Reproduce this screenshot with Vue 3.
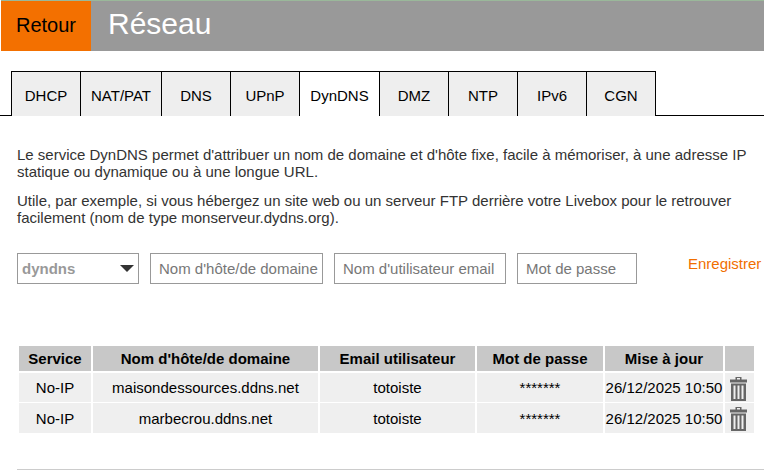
<script setup>
const tabs = ['DHCP', 'NAT/PAT', 'DNS', 'UPnP', 'DynDNS', 'DMZ', 'NTP', 'IPv6', 'CGN']
const rows = [
  { host: 'maisondessources.ddns.net' },
  { host: 'marbecrou.ddns.net' }
]
</script>

<template>
  <div class="page">
    <header class="top">
      <div class="back">Retour</div>
      <h1 class="title">Réseau</h1>
    </header>
    <nav class="tabs">
      <div v-for="t in tabs" :key="t" class="tab" :class="{ active: t === 'DynDNS' }">{{ t }}</div>
    </nav>
    <section class="intro">
      <p>Le service DynDNS permet d'attribuer un nom de domaine et d'hôte fixe, facile à mémoriser, à une adresse IP statique ou dynamique ou à une longue URL.</p>
      <p>Utile, par exemple, si vous hébergez un site web ou un serveur FTP derrière votre Livebox pour le retrouver facilement (nom de type monserveur.dydns.org).</p>
    </section>
    <form class="form" @submit.prevent>
      <div class="select"><span>dyndns</span><i class="arrow"></i></div>
      <input class="field f1" placeholder="Nom d'hôte/de domaine" />
      <input class="field f2" placeholder="Nom d'utilisateur email" />
      <input class="field f3" placeholder="Mot de passe" />
      <a class="save">Enregistrer</a>
    </form>
    <table class="list">
      <thead>
        <tr>
          <th class="c1">Service</th>
          <th class="c2">Nom d'hôte/de domaine</th>
          <th class="c3">Email utilisateur</th>
          <th class="c4">Mot de passe</th>
          <th class="c5">Mise à jour</th>
          <th class="c6"></th>
        </tr>
      </thead>
      <tbody>
        <tr v-for="r in rows" :key="r.host">
          <td>No-IP</td>
          <td>{{ r.host }}</td>
          <td>totoiste</td>
          <td>*******</td>
          <td class="date">26/12/2025 10:50</td>
          <td class="trash">
            <svg width="17" height="24" viewBox="0 0 17 24">
              <path fill="#666" fill-rule="evenodd" d="M5.500 0h6v2.500H17v3H0v-3h5.500zM7 1v1.500h3V1zM1 6.500h15V24H1zM3.500 8.500V22H5.500V8.500zM7.500 8.500V22h2V8.500zM11.500 8.500V22h2V8.500z"/>
            </svg>
          </td>
        </tr>
      </tbody>
    </table>
    <div class="rule"></div>
  </div>
</template>

<style>
html, body { margin: 0; background: #fff; }
</style>

<style scoped>
.page {
  width: 764px;
  height: 470px;
  overflow: hidden;
  font-family: "Liberation Sans", Arial, sans-serif;
  color: #000;
  position: relative;
}
.top {
  display: flex;
  height: 50px;
  margin-left: 1px;
  background: #999;
  border-top: 1px solid #9ab89a;
}
.back {
  width: 90px;
  background: #f37000;
  font-size: 20px;
  line-height: 49px;
  text-align: center;
}
.title {
  margin: 0 0 0 17px;
  font-size: 30px;
  font-weight: 400;
  color: #fff;
  line-height: 46px;
}
.tabs {
  display: flex;
  height: 45px;
  margin-top: 20px;
  padding-left: 11px;
  box-shadow: inset 0 -1px 0 #000;
}
.tab {
  box-sizing: border-box;
  height: 45px;
  padding-top: 1px;
  border: 1px solid #000;
  border-left-width: 0;
  border-bottom: 0;
  background: #eee;
  font-size: 15px;
  line-height: 46px;
  text-align: center;
}
.tab:first-child { border-left-width: 1px; width: 70px; }
.tab:nth-child(2) { width: 81px; }
.tab:nth-child(3) { width: 69px; }
.tab:nth-child(4) { width: 69px; }
.tab:nth-child(5) { width: 80px; }
.tab:nth-child(6) { width: 69px; }
.tab:nth-child(7) { width: 69px; }
.tab:nth-child(8) { width: 69px; }
.tab:nth-child(9) { width: 69px; }
.tab.active { background: #fff; }
.intro {
  margin: 30px 0 0 17px;
  width: 745px;
  font-size: 15px;
  line-height: 17px;
  color: #333;
}
.intro p { margin: 0 0 12px; }
.form {
  display: flex;
  align-items: flex-start;
  margin: 27px 0 0 17px;
}
.select, .field {
  box-sizing: border-box;
  height: 31px;
  border: 1px solid #999;
  background: #fff;
  font-family: inherit;
  font-size: 15px;
}
.select {
  display: flex;
  align-items: center;
  justify-content: space-between;
  width: 122px;
  padding: 0 4px 0 4px;
  color: #999;
  font-weight: 700;
}
.arrow {
  width: 0;
  height: 0;
  border-left: 7px solid transparent;
  border-right: 7px solid transparent;
  border-top: 7px solid #333;
}
.field {
  margin: 0 0 0 11px;
  padding: 0 0 0 8px;
  outline: 0;
}
.field::placeholder { color: #777; opacity: 1; }
.f1 { width: 173px; }
.f2 { width: 172px; }
.f3 { width: 120px; }
.save {
  margin: 2px 0 0 51px;
  color: #f16e00;
  font-size: 15px;
  line-height: 17px;
}
.list {
  margin: 62px 0 0 19px;
  width: 737px;
  table-layout: fixed;
  border-collapse: separate;
  border-spacing: 0;
  font-size: 15px;
}
.list th {
  height: 25px;
  padding: 0;
  background: #c8c8c8;
  border-right: 2px solid #fff;
  border-bottom: 2px solid #fff;
  font-weight: 700;
}
.list td {
  height: 29px;
  padding: 0;
  background: #efefef;
  border-right: 2px solid #fff;
  border-bottom: 1px solid #fff;
  text-align: center;
}
.list tr:last-child td { border-bottom: 0; height: 30px; }
.c1 { width: 72px; }
.c2 { width: 225px; }
.c3 { width: 155px; }
.c4 { width: 126px; }
.c5 { width: 118px; }
.c6 { width: 29px; }
.list td.date { white-space: nowrap; }
.list td.trash svg { display: block; margin: 2px auto 0 5px; }
.rule {
  position: absolute;
  left: 17px;
  right: 0;
  top: 469px;
  height: 1px;
  background: #ccc;
}
</style>
